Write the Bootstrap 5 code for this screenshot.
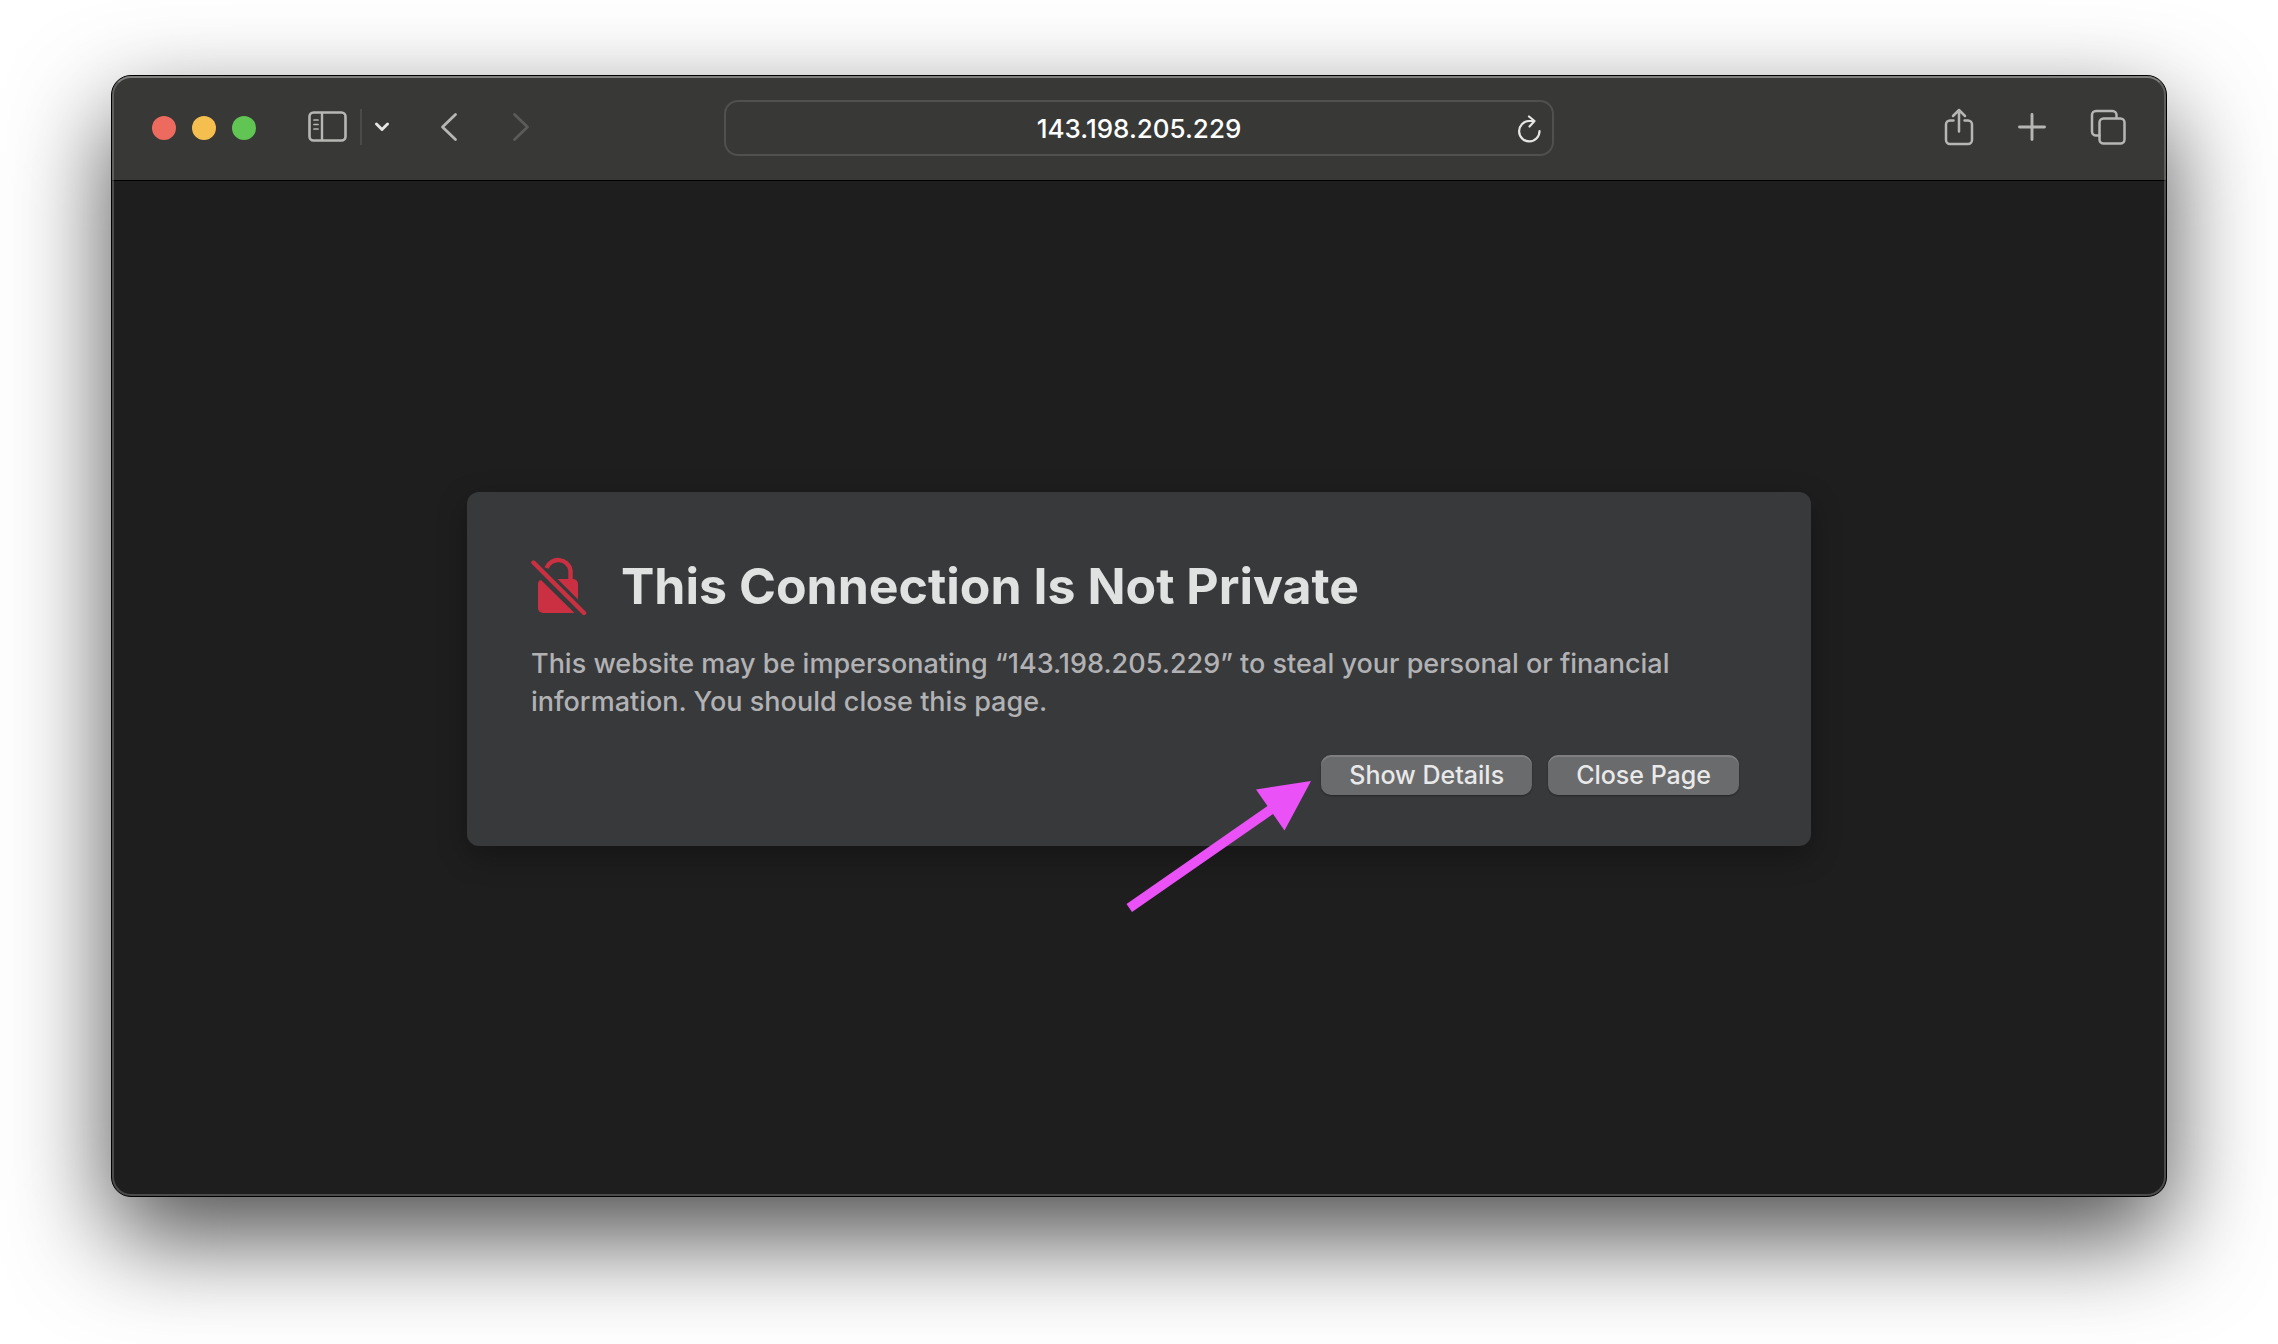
<!DOCTYPE html>
<html lang="en" data-bs-theme="dark">
<head>
<meta charset="utf-8">
<meta name="viewport" content="width=device-width, initial-scale=1">
<title>This Connection Is Not Private</title>
<link href="https://cdn.jsdelivr.net/npm/bootstrap@5.3.0/dist/css/bootstrap.min.css" rel="stylesheet">
<style>
  body { background: #fff; font-family: Inter, "Liberation Sans", sans-serif; }
  .desktop { padding: 75px 111px 147px; }
  .browser {
    border: 1px solid #000; border-radius: 20px; background: #1e1e1e;
    box-shadow: 0 40px 100px rgba(0, 0, 0, .7);
  }
  /* inner light rim drawn over the toolbar and the page */
  .browser::after {
    content: ""; position: absolute; inset: 0; border: 2px solid rgba(255, 255, 255, .2);
    border-top-color: rgba(255, 255, 255, .36); border-radius: 19px; pointer-events: none;
  }
  .toolbar {
    height: 105px; padding: 0 40px; background: #383836;
    border-bottom: 1px solid #000; border-radius: 19px 19px 0 0;
  }
  .side { flex: 1 1 0; min-width: 0; }
  .lights { gap: 16px; }
  .light { width: 24px; height: 24px; border-radius: 50%; border: 0; padding: 0; }
  .light-close { background: #ed6a5e; }
  .light-min { background: #f5bf4f; }
  .light-max { background: #61c554; }
  .nav-tools { margin-left: 52px; padding-bottom: 2px; }
  .tool { border: 0; padding: 0; background: none; color: #b6b6b4; line-height: 0; }
  .tool svg, .lock { display: block; fill: none; stroke: currentColor; stroke-linecap: round; stroke-linejoin: round; }
  .tool:disabled { color: #5b5b59; }
  .tool-bright { color: #e6e6e4; }
  .tool-sidebar { margin-right: 12px; }
  .tool-menu { margin-left: 13px; }
  .tool-back { margin-left: 51px; }
  .tool-forward { margin-left: 54px; }
  .share-tools { gap: 44px; padding-bottom: 2px; }
  .split { width: 2px; height: 36px; background: #4b4b49; }
  .address { flex: 0 0 42%; }
  .address-field {
    height: 56px; border: 2px solid #50504e; border-radius: 14px; background: transparent;
    color: #fff; font-size: 26px; font-weight: 500; line-height: 32px; padding: 0 48px;
  }
  .reload { right: 13px; top: 15px; }
  .warning {
    max-width: 1344px; margin-bottom: 39px; padding: 64px 72px 51px 64px; border: 0; border-radius: 12px;
    background: #38393b; box-shadow: 0 10px 30px rgba(0, 0, 0, .3);
  }
  .warning-head { gap: 34px; }
  .lock { color: #cb3042; }
  .title { font-size: 50px; line-height: 60px; font-weight: 700; color: #e0e1e1; }
  .message { font-size: 27px; font-weight: 500; line-height: 38px; color: #b2b2b4; max-width: 1170px; margin: 29px 0 34px; }
  .action {
    height: 40px; padding: 0 28px; border: 0; border-radius: 10px; background: #6a6b6d; color: #e9e9e9;
    font-size: 25px; font-weight: 500; line-height: 40px;
    box-shadow: inset 0 2px 0 rgba(255, 255, 255, .14), 0 1px 2px rgba(0, 0, 0, .35);
  }
  .pointer { right: 100%; top: 26px; margin-right: 10px; }
</style>
</head>
<body>
<div class="desktop d-flex flex-column min-vh-100">
  <div class="browser position-relative d-flex flex-column flex-grow-1">
    <header class="toolbar d-flex align-items-center">
      <div class="side d-flex align-items-center">
        <div class="lights d-flex">
          <button class="light light-close" type="button" aria-label="Close window"></button>
          <button class="light light-min" type="button" aria-label="Minimise window"></button>
          <button class="light light-max" type="button" aria-label="Zoom window"></button>
        </div>
        <div class="nav-tools d-flex align-items-center">
          <button class="tool tool-sidebar" type="button" aria-label="Show sidebar">
            <svg width="40" height="32" viewBox="0 0 40 32"><rect x="1.500" y="1.500" width="36" height="28" rx="4" stroke-width="2.600"/><path d="M14 2v27" stroke-width="2.400"/><path d="M6 9h4M6 13.500h4M6 18h4" stroke-width="1.700"/></svg>
          </button>
          <span class="split"></span>
          <button class="tool tool-bright tool-menu" type="button" aria-label="Tab groups">
            <svg width="14" height="10" viewBox="0 0 14 10"><path d="M1.500 2L7 7.500L12.500 2" stroke-width="2.900"/></svg>
          </button>
          <button class="tool tool-back" type="button" aria-label="Back">
            <svg width="18" height="30" viewBox="0 0 18 30"><path d="M15.500 2.500L2.500 15L15.500 27.500" stroke-width="2.800"/></svg>
          </button>
          <button class="tool tool-forward" type="button" aria-label="Forward" disabled>
            <svg width="18" height="30" viewBox="0 0 18 30"><path d="M2.500 2.500L15.500 15L2.500 27.500" stroke-width="2.800"/></svg>
          </button>
        </div>
      </div>
      <div class="address position-relative">
        <input class="address-field form-control text-center" type="text" value="143.198.205.229" aria-label="Address">
        <button class="tool tool-bright reload position-absolute" type="button" aria-label="Reload">
          <svg width="24" height="28" viewBox="0 0 24 28"><path d="M22.500 16A10.200 10.200 0 1 1 12 6H17" stroke-width="2.200"/><path d="M12 1.500L17.500 6L12.500 11.500" stroke-width="2.200"/></svg>
        </button>
      </div>
      <div class="side share-tools d-flex justify-content-end align-items-center">
        <button class="tool" type="button" aria-label="Share">
          <svg width="30" height="38" viewBox="0 0 30 38"><path d="M9.500 12.500H6A4 4 0 0 0 2 16.500V32A4 4 0 0 0 6 36H24A4 4 0 0 0 28 32V16.500A4 4 0 0 0 24 12.500H20.500M15 2.500V23.500M9 8L15 2L21 8" stroke-width="2.500"/></svg>
        </button>
        <button class="tool" type="button" aria-label="New tab">
          <svg width="28" height="28" viewBox="0 0 28 28"><path d="M14 1.500V26.500M1.500 14H26.500" stroke-width="2.900"/></svg>
        </button>
        <button class="tool" type="button" aria-label="Show tab overview">
          <svg width="36" height="36" viewBox="0 0 36 36"><rect x="9.500" y="9.500" width="25" height="25" rx="4" stroke-width="2.500"/><path d="M9.500 26.500H6A4 4 0 0 1 2 22.500V6A4 4 0 0 1 6 2H22.500A4 4 0 0 1 26.500 6V9" stroke-width="2.500"/></svg>
        </button>
      </div>
    </header>
    <main class="flex-grow-1 d-flex align-items-center justify-content-center">
      <section class="warning card w-100">
        <div class="warning-head d-flex align-items-center">
          <svg class="lock flex-shrink-0" width="56" height="60" viewBox="0 0 56 60">
            <path d="M15.500 12A12.500 12.500 0 0 1 39.500 14.500V25" stroke-width="4.400" stroke-linecap="butt"/>
            <path d="M26.500 23H42A5 5 0 0 1 47 28V43.500Z" fill="currentColor" stroke="none"/>
            <path d="M10 24L43.500 57H12A5 5 0 0 1 7 52V28Q7 24.500 10 24Z" fill="currentColor" stroke="none"/>
            <path d="M2.500 6.500L53 57" stroke-width="4.400"/>
          </svg>
          <h1 class="title mb-0">This Connection Is Not Private</h1>
        </div>
        <p class="message">This website may be impersonating “143.198.205.229” to steal your personal or financial information. You should close this page.</p>
        <div class="d-flex justify-content-end gap-3">
          <div class="position-relative">
            <button class="action d-block" type="button">Show Details</button>
            <svg class="pointer position-absolute" width="185" height="131" viewBox="0 0 185 131" aria-hidden="true">
              <path fill="#ea51f7" d="M185 0L130 8.500L141.500 25L0.500 123L6 131L147 33L158.500 49.500Z"/>
            </svg>
          </div>
          <button class="action" type="button">Close Page</button>
        </div>
      </section>
    </main>
  </div>
</div>
<script src="https://cdn.jsdelivr.net/npm/bootstrap@5.3.0/dist/js/bootstrap.bundle.min.js"></script>
</body>
</html>
